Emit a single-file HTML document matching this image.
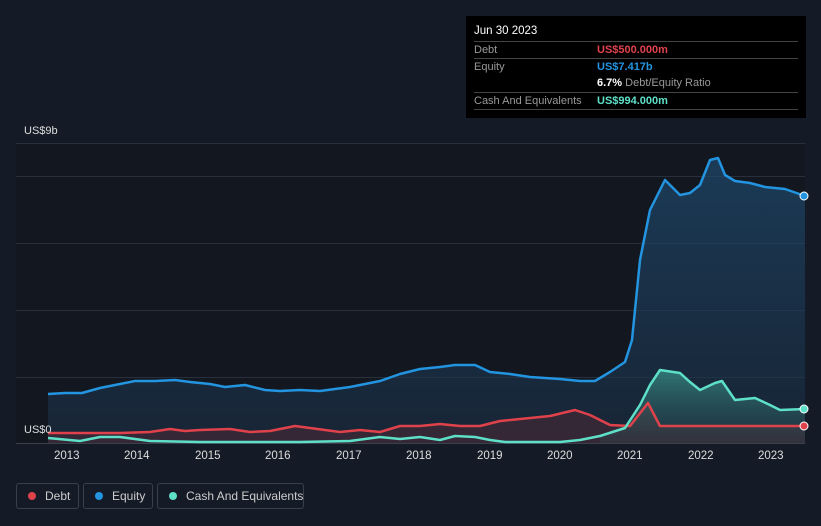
<!DOCTYPE html><html><head><style>
body{margin:0;width:821px;height:526px;background:#151b26;font-family:"Liberation Sans",sans-serif;overflow:hidden;position:relative}
.tt{position:absolute;left:466px;top:16px;width:340px;height:102px;background:#000;color:#fff;font-size:11px}
.tt .h{position:absolute;left:8px;top:9px;font-size:11.5px}
.row{position:absolute;left:8px;width:324px;border-top:1px solid #444;height:16px;line-height:16px;color:#999;white-space:nowrap}
.row span{position:absolute;left:123px;font-weight:bold}
.lg{position:absolute;top:483px;height:26px;border:1px solid #3a404b;border-radius:3px;color:#ccc;font-size:12px;line-height:24px;box-sizing:border-box;white-space:nowrap}
.lg i{position:absolute;left:11px;top:8px;width:8px;height:8px;border-radius:50%}
.ax{position:absolute;top:450px;color:#ddd;font-size:11.5px}
</style></head><body>
<svg width="821" height="526" style="position:absolute;left:0;top:0">
<defs>
<linearGradient id="ge" x1="0" y1="0" x2="0" y2="1"><stop offset="0" stop-color="#1f4a6e" stop-opacity=".7"/><stop offset="1" stop-color="#1a2e44" stop-opacity=".6"/></linearGradient>
<linearGradient id="gc" x1="0" y1="0" x2="0" y2="1"><stop offset="0" stop-color="#3fa89a" stop-opacity=".6"/><stop offset="1" stop-color="#2a4a50" stop-opacity=".3"/></linearGradient>
</defs>
<rect x="16" y="143" width="789" height="300" fill="#131720"/>
<g stroke="#2a303b" stroke-width="1"><line x1="16" y1="143.5" x2="805" y2="143.5"/><line x1="16" y1="176.5" x2="805" y2="176.5"/><line x1="16" y1="243.5" x2="805" y2="243.5"/><line x1="16" y1="310.5" x2="805" y2="310.5"/><line x1="16" y1="377.5" x2="805" y2="377.5"/><line x1="16" y1="443.5" x2="805" y2="443.5" stroke="#3a404b"/></g>
<polygon fill="url(#ge)" points="48,394 65,393 82,393 100,388 120,384 135,381 155,381 175,380 190,382 210,384 225,387 245,385 265,390 280,391 300,390 320,391 350,387 380,381 400,374 420,369 440,367 455,365 475,365 490,372 510,374 530,377 560,379 580,381 595,381 610,372 625,362 632,340 640,260 650,210 665,180 680,195 690,193 700,185 710,160 718,158 725,175 735,181 750,183 765,187 785,189 805,196 805,443 48,443"/>
<polygon fill="#4a2a35" opacity=".6" points="48,433 120,433 150,432 170,429 185,431 200,430 230,429 250,432 270,431 295,426 310,428 340,432 360,430 380,432 400,426 420,426 440,424 460,426 480,426 500,421 520,419 550,416 575,410 590,415 610,425 630,426 648,403 660,426 805,426 805,443 48,443"/>
<polygon fill="url(#gc)" points="600,436 625,428 640,405 650,385 660,370 680,373 690,382 700,390 715,383 722,381 735,400 755,398 770,405 780,410 805,409 805,443 600,443"/>
<polyline fill="none" stroke="#2394e0" stroke-width="2.5" stroke-linejoin="round" points="48,394 65,393 82,393 100,388 120,384 135,381 155,381 175,380 190,382 210,384 225,387 245,385 265,390 280,391 300,390 320,391 350,387 380,381 400,374 420,369 440,367 455,365 475,365 490,372 510,374 530,377 560,379 580,381 595,381 610,372 625,362 632,340 640,260 650,210 665,180 680,195 690,193 700,185 710,160 718,158 725,175 735,181 750,183 765,187 785,189 805,196"/>
<polyline fill="none" stroke="#e0424b" stroke-width="2.5" stroke-linejoin="round" points="48,433 120,433 150,432 170,429 185,431 200,430 230,429 250,432 270,431 295,426 310,428 340,432 360,430 380,432 400,426 420,426 440,424 460,426 480,426 500,421 520,419 550,416 575,410 590,415 610,425 630,426 648,403 660,426 805,426"/>
<polyline fill="none" stroke="#5ee0c8" stroke-width="2.5" stroke-linejoin="round" points="48,438 80,441 100,437 120,437 150,441 200,442 300,442 350,441 380,437 400,439 420,437 440,440 455,436 475,437 490,440 505,442 560,442 580,440 600,436 625,428 640,405 650,385 660,370 680,373 690,382 700,390 715,383 722,381 735,400 755,398 770,405 780,410 805,409"/>
<circle cx="804" cy="196" r="4" fill="#2394e0" stroke="#fff" stroke-width="1"/>
<circle cx="804" cy="426" r="4" fill="#e0424b" stroke="#fff" stroke-width="1"/>
<circle cx="804" cy="409" r="4" fill="#5ee0c8" stroke="#fff" stroke-width="1"/>
</svg>
<div style="position:absolute;left:24px;top:125px;color:#ddd;font-size:11px">US$9b</div>
<div style="position:absolute;left:24px;top:424px;color:#ddd;font-size:11px">US$0</div>
<div class="ax" style="left:54px">2013</div><div class="ax" style="left:124px">2014</div><div class="ax" style="left:195px">2015</div><div class="ax" style="left:265px">2016</div><div class="ax" style="left:336px">2017</div><div class="ax" style="left:406px">2018</div><div class="ax" style="left:477px">2019</div><div class="ax" style="left:547px">2020</div><div class="ax" style="left:617px">2021</div><div class="ax" style="left:688px">2022</div><div class="ax" style="left:758px">2023</div>
<div class="tt"><div class="h">Jun 30 2023</div>
<div class="row" style="top:25px">Debt<span style="color:#e0424b">US$500.000m</span></div>
<div class="row" style="top:42px">Equity<span style="color:#2394e0">US$7.417b</span></div>
<div class="row" style="top:59px;border:none"><span style="color:#fff">6.7% <b style="color:#999;font-weight:normal">Debt/Equity Ratio</b></span></div>
<div class="row" style="top:76px">Cash And Equivalents<span style="color:#5ee0c8">US$994.000m</span></div>
<div class="row" style="top:93px;height:0"></div>
</div>
<div class="lg" style="left:16px;width:63px"><i style="background:#e0424b"></i><span style="position:absolute;left:28px">Debt</span></div>
<div class="lg" style="left:83px;width:70px"><i style="background:#2394e0"></i><span style="position:absolute;left:28px">Equity</span></div>
<div class="lg" style="left:157px;width:147px"><i style="background:#5ee0c8"></i><span style="position:absolute;left:28px">Cash And Equivalents</span></div>
</body></html>
